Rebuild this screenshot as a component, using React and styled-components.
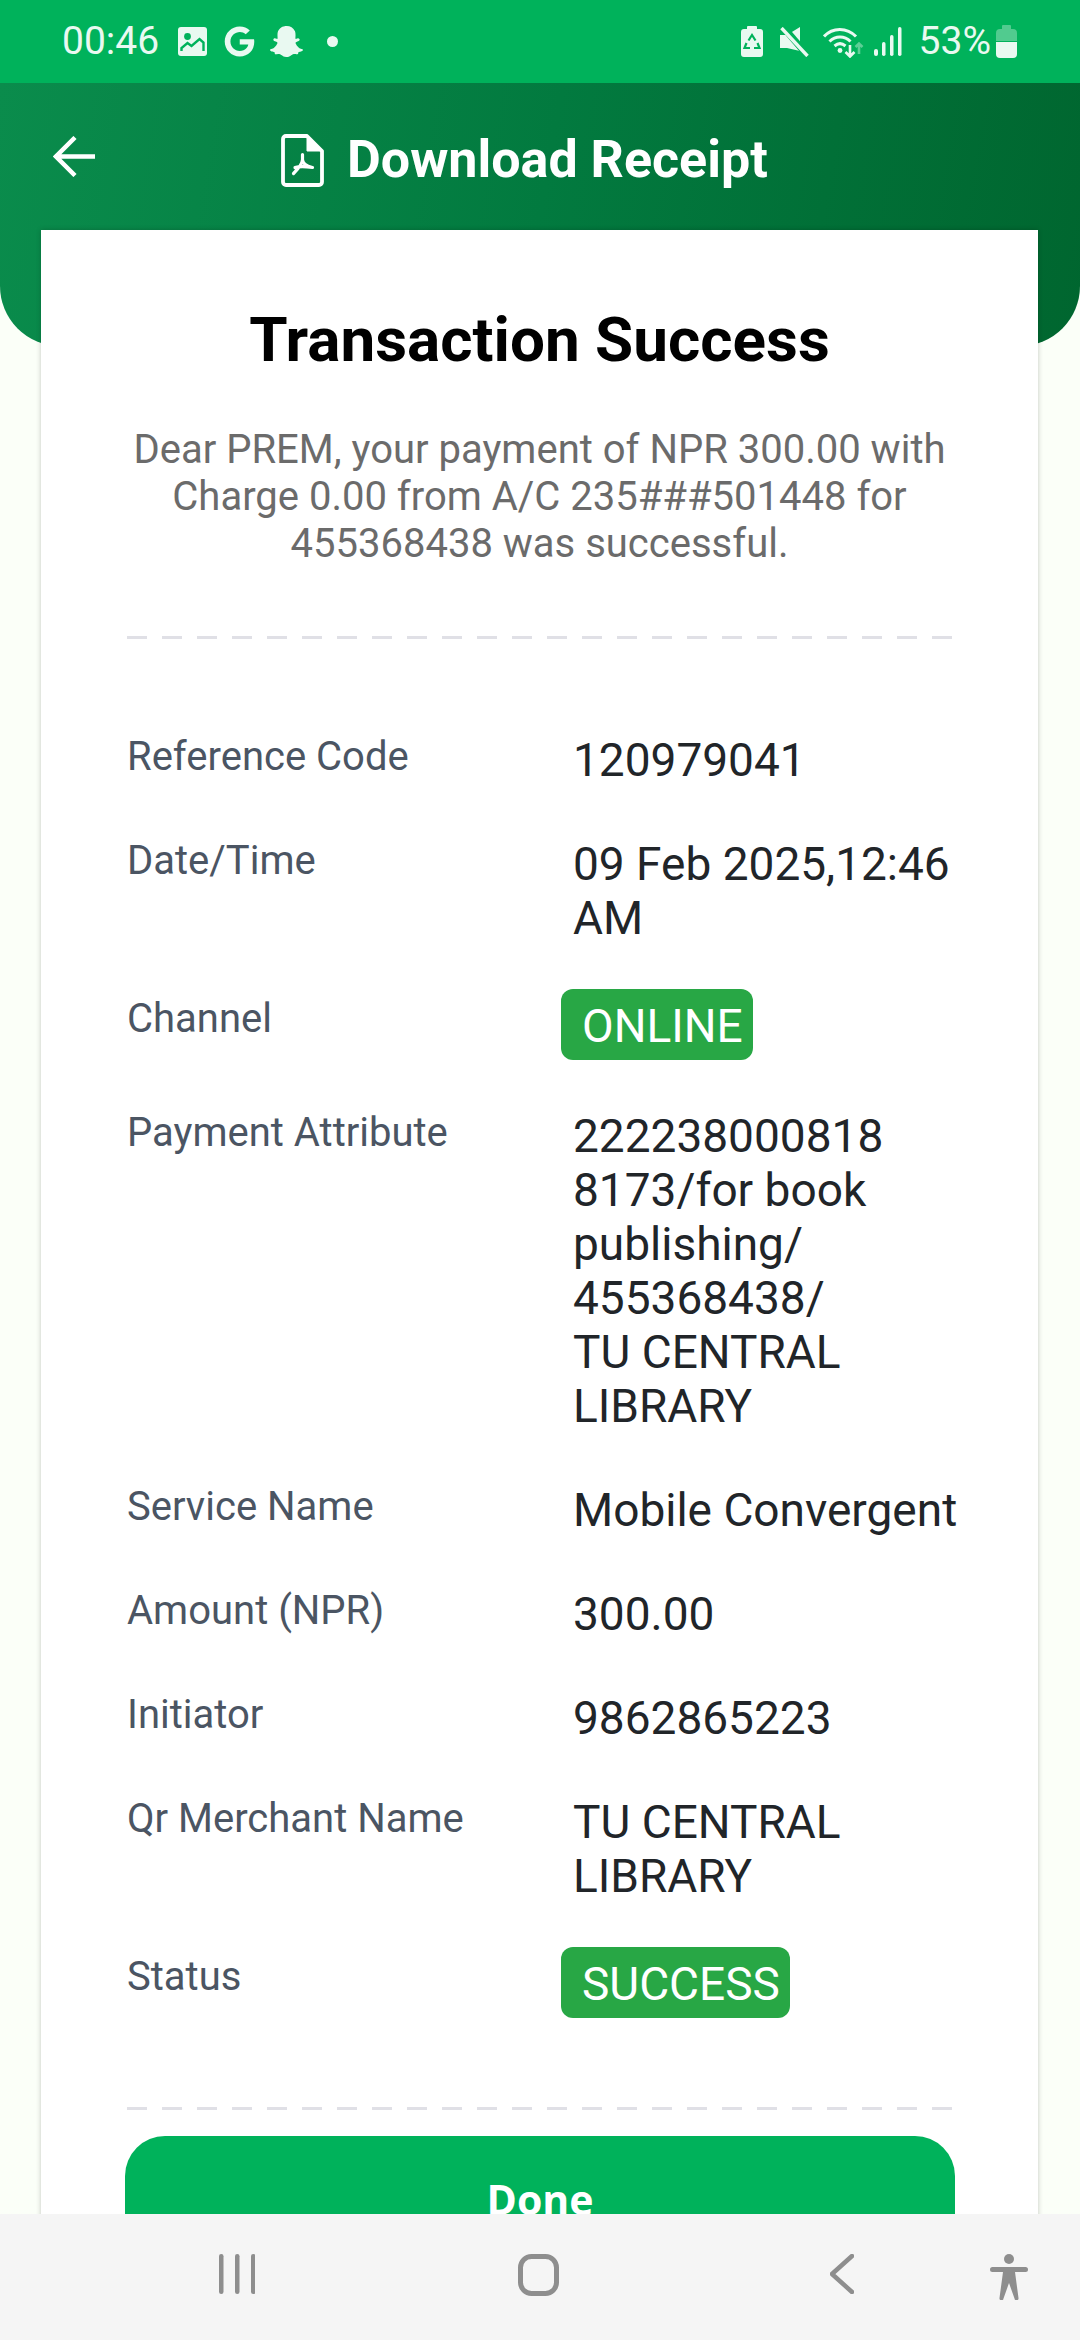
import React from 'react';
import styled, { createGlobalStyle } from 'styled-components';
import { FaGoogle, FaSnapchatGhost } from 'react-icons/fa';

const LIGHT = '#e9f9f1';
const GREEN = '#00b25b';

const GlobalStyle = createGlobalStyle`
  html, body { margin: 0; padding: 0; background: #fbfff8; }
  * { box-sizing: border-box; }
`;

const Screen = styled.div`
  position: relative;
  width: 1080px;
  height: 2340px;
  overflow: hidden;
  background: #fbfff8;
  font-family: Roboto, "Liberation Sans", sans-serif;
`;

const StatusBar = styled.div`
  height: 83px;
  background: ${GREEN};
  color: ${LIGHT};
  display: flex;
  align-items: center;
  justify-content: space-between;
  padding: 0 63px 0 62px;
  font-size: 39px;
`;

const StatusGroup = styled.div`
  display: flex;
  align-items: center;
`;

const StatusText = styled.span`
  margin-left: ${({ $left }) => $left || 0}px;
  line-height: 83px;
`;

const StatusIcon = styled.span`
  display: flex;
  margin-left: ${({ $left }) => $left || 0}px;
  color: ${LIGHT};
  svg { display: block; }
`;

const Header = styled.header`
  height: 263px;
  background: linear-gradient(100deg, #0a8c4c 0%, #027a3f 50%, #00662f 100%);
  border-radius: 0 0 60px 60px;
  display: flex;
  align-items: flex-start;
  padding: 47px 0 0 53px;
  color: #fff;
`;

const BackButton = styled.span`
  display: flex;
  margin-top: 6px;
`;

const HeaderTitle = styled.div`
  display: flex;
  align-items: center;
  margin-left: 186px;
  gap: 23px;
  font-size: 52px;
  font-weight: 700;
  line-height: 60px;
`;

const Card = styled.main`
  position: relative;
  width: 997px;
  height: 2200px;
  margin: -116px 0 0 41px;
  padding: 78px 86px 0;
  background: #fff;
  box-shadow: 0 0 5px rgba(0, 0, 0, 0.22);
`;

const Title = styled.h1`
  margin: 0;
  text-align: center;
  font-size: 62px;
  line-height: 64px;
  font-weight: 700;
  color: #000;
`;

const Message = styled.p`
  margin: 54px 0 0;
  text-align: center;
  font-size: 40px;
  line-height: 47px;
  color: #6b6b6b;
`;

const Divider = styled.div`
  height: 3px;
  margin-top: ${({ $top }) => $top}px;
  background: repeating-linear-gradient(90deg, #e0e0e6 0 20px, transparent 20px 35px);
`;

const Rows = styled.div`
  display: flex;
  flex-direction: column;
  gap: 50px;
  margin-top: 94px;
`;

const Row = styled.div`
  display: grid;
  grid-template-columns: 446px 1fr;
  align-items: start;
`;

const Label = styled.div`
  margin-top: 1px;
  font-size: 40px;
  line-height: 46px;
  color: #4b5563;
`;

const Value = styled.div`
  font-size: 46px;
  line-height: 54px;
  color: #212529;
  white-space: pre;
`;

const Badge = styled.span`
  display: inline-block;
  height: 71px;
  margin: -6px 0 -1px -12px;
  padding: 0 10px 0 21px;
  border-radius: 12px;
  background: #28a745;
  color: #fff;
  font-size: 46px;
  line-height: 75px;
`;

const DoneButton = styled.button`
  display: block;
  width: 830px;
  height: 126px;
  margin: 26px 0 0 -2px;
  border: 0;
  border-radius: 40px;
  background: ${GREEN};
  color: #fff;
  font-family: "Open Sans", sans-serif;
  font-size: 41px;
  font-weight: 700;
`;

const NavBar = styled.nav`
  position: absolute;
  left: 0;
  right: 0;
  bottom: 0;
  height: 126px;
  background: #f5f5f5;
  display: flex;
  align-items: flex-start;
  padding: 40px 0 0 219px;
  color: #8e8e8e;
`;

const NavIcon = styled.span`
  display: flex;
  margin-left: ${({ $left }) => $left || 0}px;
`;

const rows = [
  ['Reference Code', '120979041'],
  ['Date/Time', '09 Feb 2025,12:46\nAM'],
  ['Channel', null, 'ONLINE'],
  ['Payment Attribute', '222238000818\n8173/for book\npublishing/\n455368438/\nTU CENTRAL\nLIBRARY'],
  ['Service Name', 'Mobile Convergent'],
  ['Amount (NPR)', '300.00'],
  ['Initiator', '9862865223'],
  ['Qr Merchant Name', 'TU CENTRAL\nLIBRARY'],
  ['Status', null, 'SUCCESS'],
];

const ImageIcon = () => (
  <svg width="29" height="29" viewBox="0 0 29 29">
    <rect width="29" height="29" rx="3" fill={LIGHT} />
    <circle cx="9.5" cy="9.5" r="3.4" fill={GREEN} />
    <path d="M3.5 24v-3l6-5 4 3 8-7 4 3.5V24" fill="none" stroke={GREEN} strokeWidth="2.4" />
  </svg>
);

const RecycleBattery = () => (
  <svg width="22" height="31" viewBox="0 0 22 31">
    <path d="M7 0h8a1 1 0 0 1 1 1v2h3a3 3 0 0 1 3 3v22a3 3 0 0 1-3 3H3a3 3 0 0 1-3-3V6a3 3 0 0 1 3-3h3V1a1 1 0 0 1 1-1z" fill={LIGHT} />
    <path d="M7.500 14.500L11 9l3.500 5.500M16.500 17l2 5H13M9 22H3.500l2-5" fill="none" stroke={GREEN} strokeWidth="2.200" />
  </svg>
);

const MuteIcon = () => (
  <svg width="29" height="30" viewBox="0 0 29 30">
    <path d="M20 0v24L7 21H0V8h7z" fill={LIGHT} />
    <path d="M4 1l24 28" stroke={GREEN} strokeWidth="7" />
    <path d="M1.5 1l26 28" stroke={LIGHT} strokeWidth="3.4" />
  </svg>
);

const WifiIcon = () => (
  <svg width="41" height="32" viewBox="0 0 41 32" fill="none">
    <path d="M1 10.5C9.5 1 24 1 33 10.5" stroke={LIGHT} strokeWidth="3" />
    <path d="M6.5 15.5c6-6 15-6 21 0" stroke={LIGHT} strokeWidth="3" />
    <path d="M11.5 20c3.500-3 7.500-3 11 0" stroke={LIGHT} strokeWidth="3" />
    <circle cx="17" cy="24.500" r="2.400" fill={LIGHT} />
    <path d="M27 19v11M22.500 26l4.500 4.500 4.500-4.500" stroke={LIGHT} strokeWidth="2.600" />
    <path d="M36 28V17M32.500 21l3.500-3.500 3.500 3.500" stroke={LIGHT} strokeOpacity="0.4" strokeWidth="2.600" />
  </svg>
);

const SignalIcon = () => (
  <svg width="28" height="29" viewBox="0 0 28 29" fill={LIGHT}>
    <rect x="0" y="22" width="4" height="7" rx="2" />
    <rect x="8" y="15" width="3.500" height="14" rx="1.700" />
    <rect x="16" y="8" width="3.500" height="21" rx="1.700" />
    <rect x="24" y="0" width="3.500" height="29" rx="1.700" />
  </svg>
);

const BatteryIcon = () => (
  <svg width="21" height="33" viewBox="0 0 21 33" fill={LIGHT}>
    <path d="M7 0h7a1 1 0 0 1 1 1v3h2a4 4 0 0 1 4 4v8H0V8a4 4 0 0 1 4-4h2V1a1 1 0 0 1 1-1z" fillOpacity="0.35" />
    <path d="M0 17h21v12a4 4 0 0 1-4 4H4a4 4 0 0 1-4-4z" />
  </svg>
);

const BackArrow = () => (
  <svg width="42" height="41" viewBox="0 0 42 41" fill="none" stroke="#fff" strokeWidth="4.500">
    <path d="M42 20.500H3M22 1.500L3 20.500l19 19" />
  </svg>
);

const PdfIcon = () => (
  <svg width="43" height="53" viewBox="0 0 43 53" fill="none" stroke="#fff">
    <path d="M5 2h21l15 15v31a3 3 0 0 1-3 3H5a3 3 0 0 1-3-3V5a3 3 0 0 1 3-3z" strokeWidth="3.800" strokeLinejoin="round" />
    <path d="M26 2l15 15H26z" fill="#fff" strokeWidth="1" />
    <path d="M21.500 20.500v5c0 3-4 9-9 14M21.500 25.500c0 3 3 7 10 8M14 33.500c5-1.500 11-1 17.500 0" strokeWidth="3.200" strokeLinecap="round" />
  </svg>
);

const RecentsIcon = () => (
  <svg width="36" height="40" viewBox="0 0 36 40" fill="currentColor">
    <rect x="0" y="0" width="4.500" height="40" rx="2.200" />
    <rect x="16" y="0" width="4.500" height="40" rx="2.200" />
    <rect x="32" y="0" width="4.500" height="40" rx="2.200" />
  </svg>
);

const HomeIcon = () => (
  <svg width="41" height="42" viewBox="0 0 41 42" fill="none" stroke="currentColor" strokeWidth="5">
    <rect x="2.500" y="2.500" width="36" height="37" rx="11" />
  </svg>
);

const NavBackIcon = () => (
  <svg width="24" height="40" viewBox="0 0 24 40" fill="none" stroke="currentColor" strokeWidth="4.500" strokeLinecap="round" strokeLinejoin="round">
    <path d="M22 2L2 20l20 18" />
  </svg>
);

const AccessIcon = () => (
  <svg width="38" height="46" viewBox="0 0 38 46" fill="currentColor">
    <circle cx="19" cy="5" r="5" />
    <path d="M2.500 13h33a2.500 2.500 0 0 1 0 5H25l3.500 26a2 2 0 0 1-4 .5L19 29l-5.500 15.500a2 2 0 0 1-4-.5L13 18H2.500a2.500 2.500 0 0 1 0-5z" />
  </svg>
);

const App = () => (
  <>
    <GlobalStyle />
    <Screen>
      <StatusBar>
        <StatusGroup>
          <StatusText>00:46</StatusText>
          <StatusIcon $left={19}><ImageIcon /></StatusIcon>
          <StatusIcon $left={17}><FaGoogle size={31} /></StatusIcon>
          <StatusIcon $left={15}><FaSnapchatGhost size={33} /></StatusIcon>
          <StatusIcon $left={24}>
            <svg width="11" height="11" viewBox="0 0 11 11"><circle cx="5.500" cy="5.500" r="5.500" fill={LIGHT} /></svg>
          </StatusIcon>
        </StatusGroup>
        <StatusGroup>
          <StatusIcon><RecycleBattery /></StatusIcon>
          <StatusIcon $left={17}><MuteIcon /></StatusIcon>
          <StatusIcon $left={14}><WifiIcon /></StatusIcon>
          <StatusIcon $left={10}><SignalIcon /></StatusIcon>
          <StatusText $left={17}>53%</StatusText>
          <StatusIcon $left={5}><BatteryIcon /></StatusIcon>
        </StatusGroup>
      </StatusBar>
      <Header>
        <BackButton><BackArrow /></BackButton>
        <HeaderTitle>
          <PdfIcon />
          Download Receipt
        </HeaderTitle>
      </Header>
      <Card>
        <Title>Transaction Success</Title>
        <Message>
          Dear PREM, your payment of NPR 300.00 with Charge 0.00 from A/C 235###501448 for 455368438 was successful.
        </Message>
        <Divider $top={69} />
        <Rows>
          {rows.map(([label, value, badge]) => (
            <Row key={label}>
              <Label>{label}</Label>
              {badge ? <div><Badge>{badge}</Badge></div> : <Value>{value}</Value>}
            </Row>
          ))}
        </Rows>
        <Divider $top={90} />
        <DoneButton>Done</DoneButton>
      </Card>
      <NavBar>
        <NavIcon><RecentsIcon /></NavIcon>
        <NavIcon $left={263}><HomeIcon /></NavIcon>
        <NavIcon $left={271}><NavBackIcon /></NavIcon>
        <NavIcon $left={136}><AccessIcon /></NavIcon>
      </NavBar>
    </Screen>
  </>
);

export default App;
